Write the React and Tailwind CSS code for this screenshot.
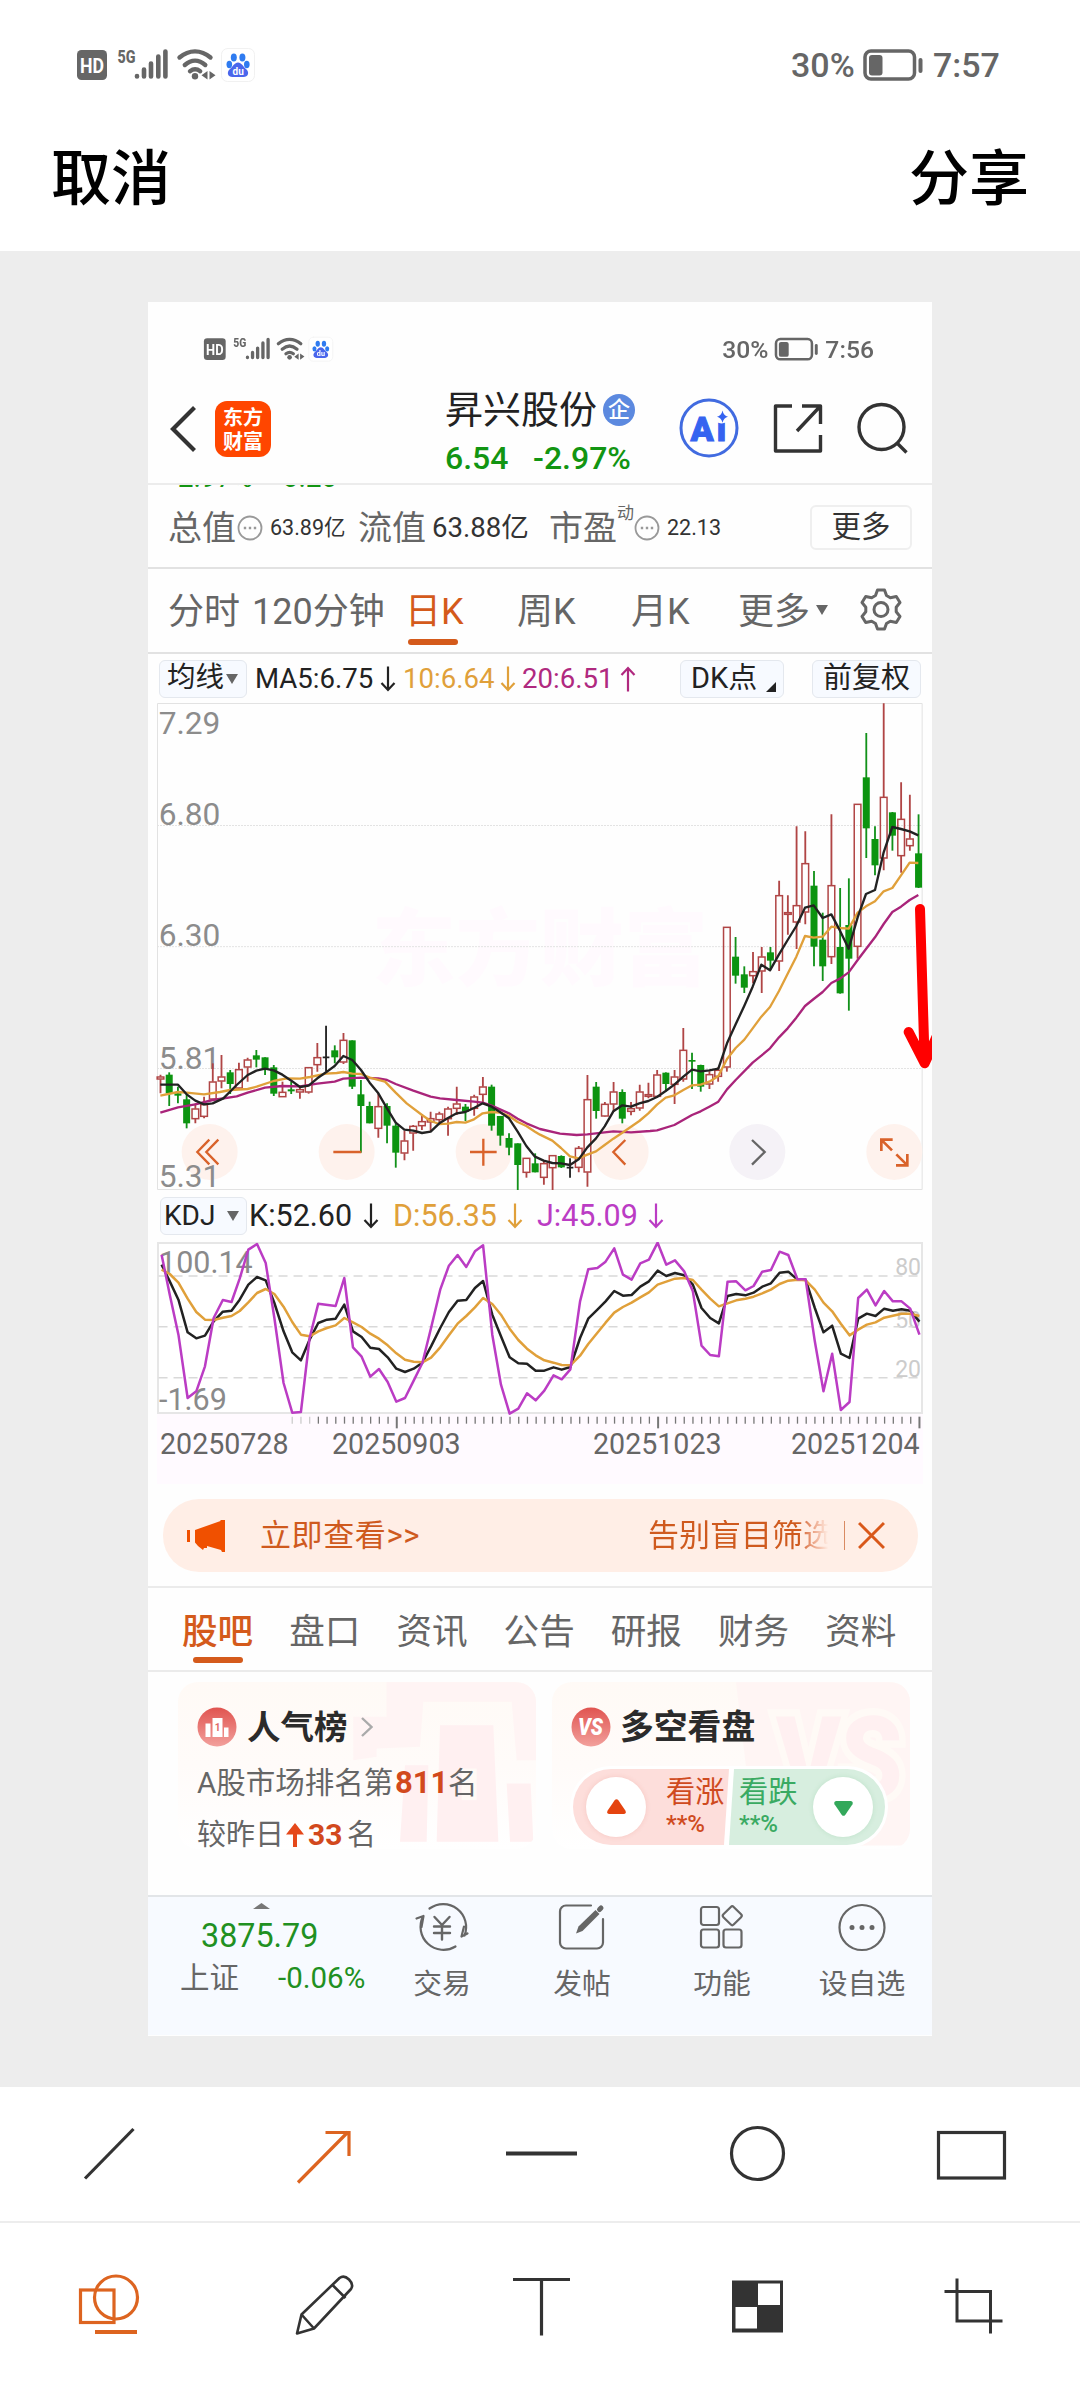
import React from 'react';
import { clsx } from 'clsx';

// [type, high, bodyTop, bodyBottom, low] - r: up, g: down, k: flat
const candles = [
  ['r', 1154, 1160, 1168, 1210], ['g', 1147, 1154, 1210, 1248], ['g', 1190, 1210, 1217, 1240], ['g', 1210, 1228, 1300, 1315],
  ['r', 1240, 1256, 1287, 1300], ['r', 1220, 1243, 1280, 1285], ['r', 1120, 1175, 1228, 1228], ['r', 1095, 1160, 1174, 1195],
  ['g', 1140, 1147, 1182, 1212], ['r', 1118, 1138, 1195, 1197], ['r', 1103, 1109, 1132, 1175], ['g', 1080, 1096, 1109, 1132],
  ['g', 1102, 1102, 1138, 1155], ['g', 1125, 1132, 1211, 1218], ['r', 1175, 1206, 1221, 1221], ['g', 1175, 1198, 1204, 1212],
  ['r', 1190, 1198, 1207, 1226], ['r', 1132, 1132, 1207, 1211], ['r', 1059, 1102, 1125, 1145], ['k', 1007, 1102, 1102, 1145],
  ['g', 1066, 1081, 1102, 1120], ['r', 1029, 1050, 1117, 1122], ['g', 1051, 1051, 1190, 1197], ['g', 1170, 1213, 1248, 1388],
  ['g', 1235, 1248, 1300, 1300], ['r', 1210, 1249, 1316, 1343], ['g', 1240, 1248, 1307, 1360], ['g', 1300, 1307, 1388, 1433],
  ['r', 1322, 1352, 1390, 1411], ['r', 1305, 1308, 1330, 1382], ['r', 1272, 1294, 1308, 1320], ['r', 1265, 1285, 1297, 1325],
  ['r', 1265, 1271, 1290, 1300], ['r', 1250, 1256, 1287, 1337], ['r', 1190, 1241, 1256, 1275], ['g', 1242, 1250, 1265, 1293],
  ['r', 1214, 1220, 1256, 1277], ['r', 1161, 1190, 1214, 1238], ['g', 1184, 1190, 1307, 1322], ['g', 1278, 1278, 1337, 1367],
  ['g', 1330, 1344, 1373, 1396], ['g', 1360, 1360, 1425, 1500], ['r', 1404, 1404, 1448, 1463], ['g', 1390, 1420, 1447, 1447],
  ['r', 1410, 1420, 1463, 1484], ['r', 1396, 1396, 1434, 1500], ['g', 1396, 1398, 1432, 1434], ['k', 1405, 1433, 1433, 1463],
  ['r', 1368, 1374, 1433, 1447], ['r', 1155, 1228, 1447, 1490], ['g', 1176, 1190, 1263, 1286], ['r', 1236, 1242, 1279, 1280],
  ['r', 1176, 1205, 1243, 1265], ['g', 1198, 1206, 1286, 1300], ['r', 1236, 1255, 1265, 1276], ['r', 1184, 1205, 1255, 1262],
  ['r', 1178, 1213, 1220, 1225], ['r', 1140, 1154, 1220, 1222], ['g', 1147, 1148, 1182, 1204], ['r', 1140, 1160, 1184, 1242],
  ['r', 1014, 1080, 1168, 1175], ['g', 1088, 1110, 1113, 1197], ['g', 1124, 1125, 1190, 1205], ['r', 1144, 1153, 1183, 1197],
  ['r', 1132, 1140, 1160, 1175], ['r', 711, 711, 1132, 1145], ['g', 741, 800, 857, 881], ['g', 829, 853, 893, 909],
  ['r', 786, 844, 858, 880], ['r', 771, 800, 844, 909], ['g', 771, 787, 812, 840], ['r', 572, 616, 814, 843],
  ['r', 616, 667, 674, 734], ['r', 409, 646, 697, 777], ['r', 424, 520, 667, 703], ['g', 543, 587, 770, 829],
  ['g', 668, 749, 829, 873], ['r', 373, 586, 801, 822], ['g', 594, 771, 910, 911], ['g', 565, 705, 806, 962],
  ['r', 342, 342, 770, 806], ['g', 129, 262, 415, 504], ['g', 409, 447, 526, 556], ['r', 40, 321, 505, 541],
  ['g', 366, 367, 437, 482], ['r', 277, 387, 498, 548], ['r', 314, 446, 468, 482], ['g', 373, 490, 593, 594],
];

const ma5 = '61,1184 114,1184 140,1213 166,1232 192,1243 218,1240 250,1225 290,1185 323,1155 349,1142 375,1136 401,1141 427,1154 454,1172 480,1191 506,1187 532,1165 558,1147 584,1128 610,1098 637,1110 663,1140 689,1178 715,1210 741,1255 767,1298 793,1319 820,1322 846,1329 872,1325 898,1300 924,1284 950,1270 976,1266 1002,1254 1028,1240 1055,1250 1081,1267 1107,1285 1133,1325 1159,1368 1185,1400 1211,1412 1237,1419 1263,1420 1290,1425 1316,1408 1342,1372 1368,1345 1394,1309 1420,1264 1447,1246 1473,1250 1498,1240 1525,1233 1551,1221 1577,1203 1603,1184 1630,1160 1656,1139 1682,1144 1708,1141 1735,1136 1761,1060 1787,1003 1813,947 1838,890 1864,824 1890,841 1917,793 1943,750 1969,708 1995,653 2021,646 2048,684 2074,673 2100,722 2126,776 2153,682 2178,612 2205,600 2231,487 2257,411 2283,417 2309,424 2335,436';
const ma10 = '61,1217 114,1206 140,1208 192,1213 240,1206 270,1200 323,1197 350,1190 401,1173 440,1165 480,1166 510,1161 558,1151 590,1149 610,1146 637,1151 663,1152 689,1163 735,1175 767,1208 800,1240 846,1275 872,1293 898,1302 924,1301 950,1296 976,1298 1002,1288 1028,1270 1055,1266 1081,1268 1107,1278 1133,1296 1159,1308 1185,1325 1200,1334 1237,1352 1263,1374 1290,1399 1316,1405 1342,1394 1368,1384 1394,1365 1420,1346 1447,1328 1473,1310 1498,1293 1525,1270 1551,1244 1577,1223 1603,1216 1630,1200 1656,1186 1682,1184 1708,1175 1735,1158 1761,1107 1787,1074 1813,1049 1838,1015 1864,980 1890,951 1917,903 1943,851 1969,800 1995,738 2021,743 2048,740 2074,710 2100,714 2126,716 2153,668 2178,649 2205,634 2231,604 2257,594 2283,556 2309,518 2335,519';
const ma20 = '61,1268 114,1252 166,1243 218,1230 290,1219 323,1208 375,1193 427,1188 480,1189 532,1181 584,1175 610,1166 663,1163 715,1165 741,1170 767,1182 820,1202 872,1220 900,1225 950,1230 1002,1235 1028,1238 1055,1247 1107,1270 1133,1286 1159,1300 1200,1317 1260,1331 1310,1335 1342,1333 1420,1324 1473,1327 1530,1323 1551,1321 1603,1305 1656,1275 1682,1264 1708,1250 1735,1235 1761,1198 1787,1170 1838,1118 1864,1097 1890,1075 1917,1042 1943,1015 1969,983 1995,948 2021,927 2048,906 2074,879 2100,866 2126,847 2153,810 2178,777 2205,742 2231,702 2257,666 2283,650 2309,630 2335,615';

const kdjJ = '42,190 58,310 75,430 93,620 110,600 127,525 144,380 162,326 179,332 195,262 212,175 229,158 246,215 263,380 281,575 298,664 315,662 332,440 349,337 383,344 400,260 417,468 434,496 451,556 468,533 485,572 502,631 519,620 536,568 553,515 570,410 588,295 605,223 622,191 639,227 656,180 672,162 690,430 707,580 724,667 741,652 758,606 775,627 792,598 810,552 826,564 843,534 862,330 878,234 896,230 912,211 929,171 946,250 963,265 980,216 997,205 1014,154 1031,220 1048,207 1066,240 1083,300 1100,463 1117,491 1134,495 1151,271 1168,270 1186,297 1202,284 1219,241 1236,236 1253,181 1270,191 1288,264 1304,264 1322,450 1339,600 1356,487 1373,656 1390,632 1407,320 1424,295 1441,342 1458,299 1475,330 1492,330 1509,352 1527,430';
const kdjK = '42,220 58,270 75,325 93,423 110,441 127,433 144,390 162,361 179,358 195,325 212,280 229,257 246,267 263,335 281,420 298,483 315,507 332,445 349,395 366,385 383,382 400,340 417,420 434,437 451,469 468,473 485,498 502,532 519,542 536,532 553,514 570,465 588,410 605,362 622,328 639,326 656,290 672,269 690,370 707,435 724,498 741,516 758,517 775,538 792,538 810,528 826,535 843,527 862,440 878,382 896,355 912,330 929,299 946,313 963,311 980,286 997,270 1014,238 1031,254 1048,245 1066,252 1083,280 1100,350 1117,380 1134,396 1151,314 1168,308 1186,312 1202,304 1219,286 1236,276 1253,244 1270,241 1288,265 1304,265 1322,350 1339,423 1356,403 1373,487 1390,500 1407,382 1424,367 1441,374 1458,352 1475,358 1492,354 1509,358 1527,391';
const kdjD = '42,235 58,248 75,274 93,322 110,362 127,385 144,386 162,379 179,374 195,359 212,333 229,305 246,293 263,308 281,346 298,392 315,430 332,435 349,420 366,410 383,402 400,380 417,393 434,407 451,427 468,442 485,462 502,486 519,505 536,511 553,513 570,499 588,468 605,432 622,397 639,374 656,348 672,320 690,338 707,370 724,412 741,446 758,472 775,492 792,507 810,514 826,521 843,522 862,493 878,458 896,424 912,394 929,364 946,347 963,334 980,318 997,303 1014,280 1031,271 1048,262 1066,260 1083,266 1100,295 1117,322 1134,345 1151,336 1168,327 1186,322 1202,316 1219,306 1236,295 1253,278 1270,268 1288,265 1304,267 1322,295 1339,334 1356,360 1373,397 1390,432 1407,415 1424,400 1441,393 1458,379 1475,373 1492,367 1509,367 1527,374';

const ticks = Array.from({ length: 73 }, (_, i) => 298 + i * 17.07);

function StatusBar({ time }) {
  return (
    <div className="flex h-[130px] w-[1080px] items-center justify-between pl-[75px] pr-[79px] text-[#666]">
      <svg className="h-10 w-[185px]" viewBox="75 45 185 40" fill="none" stroke="#666" strokeLinecap="round">
        <rect x="77" y="50" width="30" height="30" rx="4.500" fill="#666" stroke="none" />
        <text x="92" y="72.500" textAnchor="middle" fontSize="20" fontWeight="700" fill="#fff" stroke="none" textLength="24" lengthAdjust="spacingAndGlyphs">HD</text>
        <text x="117.500" y="62.500" fontSize="18.500" fontWeight="800" fill="#666" stroke="none" textLength="18" lengthAdjust="spacingAndGlyphs">5G</text>
        <path d="M137 76v.5M144 69.500v7M151 63.500v13M158.300 56.500v20M165.400 51.500v25" strokeWidth="4.600" />
        <path d="M179.500 57.500c9.500-8.200 21.500-8.200 31 0M184.800 65c6.500-5.600 14-5.600 20.500 0M190 71.200c3.400-2.500 6.800-2.500 10.200 0" strokeWidth="4.400" />
        <circle cx="195" cy="76.200" r="3.200" fill="#666" stroke="none" />
        <path d="M207.500 71v8.500l-6-4.200zM209.500 79.500V71l6 4.200z" fill="#666" stroke="none" />
        <rect x="221.500" y="48.500" width="33" height="33" rx="6" fill="#fff" stroke="#f1f1f1" />
        <g fill="#2f7bf0" stroke="none">
          <ellipse cx="233.800" cy="57.500" rx="3" ry="4" />
          <ellipse cx="242.400" cy="57.500" rx="3" ry="4" />
          <ellipse cx="229.300" cy="64.500" rx="2.800" ry="3.700" />
          <ellipse cx="246.800" cy="64.500" rx="2.800" ry="3.700" />
          <path d="M238 62.500c3.500 0 5 4 8 6.500 4 3.500 2 8-2.500 8h-11c-4.500 0-6.500-4.500-2.500-8 3-2.500 4.500-6.500 8-6.500z" fill="#4a66ec" />
        </g>
        <text x="238.200" y="74.500" textAnchor="middle" fontSize="10" fontWeight="700" fill="#fff" stroke="none">du</text>
      </svg>
      <div className="flex items-center text-[34px] font-medium leading-none">
        <span className="w-[70px]">30%</span>
        <svg className="mr-2 h-9 w-16" viewBox="862 46 64 36" fill="none" stroke="#666">
          <rect x="866" y="50" width="49.500" height="28" rx="6" strokeWidth="3.500" />
          <rect x="870" y="54" width="13.500" height="20.500" rx="3" fill="#666" stroke="none" />
          <path d="M921.500 59v11" strokeWidth="4" strokeLinecap="round" />
        </svg>
        <span className="w-[68px]">{time}</span>
      </div>
    </div>
  );
}

function Arrow({ up, className }) {
  return (
    <svg className={clsx('h-[26px] w-4 shrink-0', className)} viewBox="0 0 16 26" fill="none" stroke="currentColor" strokeWidth="2.200">
      {up ? <path d="M8 25.500V2M1.500 9 8 2l6.500 7" /> : <path d="M8 .5V24M1.500 17 8 24l6.500-7" />}
    </svg>
  );
}

function Caret({ className }) {
  return (
    <svg className={clsx('h-[10px] w-3 shrink-0', className)} viewBox="0 0 12 10" fill="currentColor">
      <path d="M0 0h12L6 10z" />
    </svg>
  );
}

function Dots() {
  return (
    <svg className="h-[26px] w-[26px] shrink-0" viewBox="0 0 26 26" fill="none" stroke="#999" strokeWidth="1.800">
      <circle cx="13" cy="13" r="11.500" />
      <path d="M6.800 13h2.400M11.800 13h2.400M16.800 13h2.400" strokeWidth="2.400" />
    </svg>
  );
}

function StockHeader() {
  return (
    <div className="flex h-[87px] items-start pl-[21px] text-[#222]">
      <svg className="mt-[9px] h-12 w-7" viewBox="0 0 28 48" fill="none" stroke="#333" strokeWidth="4.200">
        <path d="M25.500 2.500 4 24l21.500 21.500" />
      </svg>
      <div className="ml-[18px] mt-[5px] flex h-14 w-14 flex-col items-center justify-center rounded-xl bg-[#ff4600] font-['Noto_Sans_CJK_SC',sans-serif] text-[20px] font-bold leading-6 text-white">
        <span>东方</span>
        <span>财富</span>
      </div>
      <div className="ml-[174px] w-[200px]">
        <div className="flex h-7 items-center whitespace-nowrap text-[38px] leading-none">
          昇兴股份
          <span className="ml-1.5 flex h-8 w-8 items-center justify-center rounded-full bg-[#5c89df] text-[22px] font-medium text-white">企</span>
        </div>
        <div className="mt-[20px] flex h-7 items-center text-[32px] font-medium leading-none text-[#129512]">
          <span className="w-[88px]">6.54</span>
          <span>-2.97%</span>
        </div>
      </div>
      <svg className="ml-[33px] mt-[1px] h-[62px] w-[62px]" viewBox="0 0 62 62" fill="none">
        <circle cx="31" cy="31" r="28" stroke="#416be0" strokeWidth="3" />
        <text x="12.500" y="43.500" fontSize="34" fontWeight="900" letterSpacing="3" fill="#3563f0" stroke="#3563f0" strokeWidth="1">Ai</text>
        <circle cx="43.500" cy="20" r="6.500" fill="#fefefe" />
        <path d="M44.500 13.500q1.200 5.500 5.500 6.300-4.300 1-5.500 6-1.200-5-5.500-6 4.300-.8 5.500-6.300z" fill="#3563f0" />
      </svg>
      <svg className="ml-[32px] mt-[7px] h-[52px] w-[52px]" viewBox="0 0 52 52" fill="none" stroke="#333" strokeWidth="3.400" strokeLinejoin="round">
        <path d="M20 3H3.500v45h45V32M30 3h18.500v18M48 3.500 25 28" />
      </svg>
      <svg className="ml-[32px] mt-[6px] h-[54px] w-[54px]" viewBox="0 0 54 54" fill="none" stroke="#333" strokeWidth="3.400">
        <circle cx="25.500" cy="25" r="22.500" />
        <path d="M41 41l9.500 9.500" />
      </svg>
    </div>
  );
}

function Quote() {
  return (
    <div className="h-[84px] border-t-2 border-[#ececec]">
      <div className="flex h-1 items-end overflow-hidden pl-[22px] text-[28px] leading-[22px] text-[#129512]">
        <span className="w-[105px]">-2.97%</span>
        <span>-0.20</span>
      </div>
      <div className="flex h-[76px] items-center whitespace-nowrap pl-[20px] pt-px leading-none text-[#333]">
        <span className="w-[69px] text-[34px] text-[#666]">总值</span>
        <Dots />
        <span className="ml-[7px] w-[88px] text-[21.5px]">63.89亿</span>
        <span className="w-[74px] text-[34px] text-[#666]">流值</span>
        <span className="w-[117px] text-[27.6px]">63.88亿</span>
        <span className="w-[68px] text-[34px] text-[#666]">市盈</span>
        <span className="mb-[29px] w-[17px] text-[17px] text-[#666]">动</span>
        <Dots />
        <span className="ml-[7px] w-[143px] text-[21.5px]">22.13</span>
        <span className="flex h-[45px] w-[102px] items-center justify-center rounded-md border-2 border-[#efefef] text-[29.5px]">更多</span>
      </div>
    </div>
  );
}

function PeriodTabs() {
  return (
    <div className="flex h-[85px] items-center whitespace-nowrap border-t-2 border-[#e2e2e2] pl-[20px] pt-[3px] text-[36px] leading-none text-[#666]">
      <span className="w-[84px]">分时</span>
      <span className="w-[153px]">120分钟</span>
      <span className="relative w-[112px] text-[#d45a1b]">
        日K
        <span className="absolute -bottom-[15px] left-[3px] h-[6px] w-[50px] rounded-full bg-[#d45a1b]" />
      </span>
      <span className="w-[114px]">周K</span>
      <span className="w-[107px]">月K</span>
      <span className="w-[78px]">更多</span>
      <Caret className="mb-[4px]" />
      <svg className="mb-[4px] ml-[30px] h-[44px] w-[46px]" viewBox="0 0 46 44" fill="none" stroke="#666" strokeWidth="3" strokeLinejoin="round">
        <path d="M19.500 2h7l2 5.500 3.800 2.200 6-1.200 3.700 6-3.800 4.700v4.600l3.800 4.700-3.700 6-6-1.200-3.800 2.200-2 5.500h-7l-2-5.500-3.800-2.200-6 1.200-3.700-6 3.800-4.700v-4.600L4 14.500l3.700-6 6 1.200 3.800-2.200z" />
        <circle cx="23" cy="21.500" r="7" />
      </svg>
    </div>
  );
}

function MaRow() {
  return (
    <div className="flex h-[51px] items-center whitespace-nowrap border-t-2 border-[#e2e2e2] pl-[11px] text-[27.6px] leading-none text-[#222]">
      <span className="flex h-[38px] w-[88px] items-center rounded-md border border-[#e4e8ee] bg-[#f7faff] pl-[7px] text-[28.5px]">
        均线
        <Caret className="ml-[2px] text-[#666]" />
      </span>
      <span className="ml-[8px] w-[125px]">MA5:6.75</span>
      <Arrow />
      <span className="ml-[7px] w-[97px] text-[#e0a03a]">10:6.64</span>
      <Arrow className="text-[#e0a03a]" />
      <span className="ml-[6px] w-[98px] text-[#b0297f]">20:6.51</span>
      <Arrow up className="text-[#b0297f]" />
      <span className="ml-[44px] flex h-[38px] w-[104px] items-center rounded-md border border-[#e4e8ee] bg-[#f7faff] pl-[10px] text-[29px]">
        DK点
        <svg className="ml-[9px] mt-[16px] h-[10px] w-[10px]" viewBox="0 0 10 10"><path d="M10 0v10H0z" fill="#222" /></svg>
      </span>
      <span className="ml-[28px] flex h-[38px] w-[109px] items-center justify-center rounded-md border border-[#e4e8ee] bg-[#f7faff] text-[29px]">前复权</span>
    </div>
  );
}

function KChart() {
  return (
    <div className="relative ml-[9px] h-[487px] w-[765px]">
      <svg className="h-full w-full overflow-visible" viewBox="51 39 2295 1461" fill="none" strokeWidth="5.500" strokeLinejoin="round">
        <text x="695" y="866" fontSize="252" fontWeight="900" fill="#fffafe" className="font-['Noto_Sans_CJK_SC',sans-serif]">东方财富</text>
        <path d="M51 406.500h2295M51 770h2295M51 1135.500h2295" stroke="#e3e3e3" strokeWidth="3" strokeDasharray="6 3" />
        <rect x="52.500" y="40.500" width="2294" height="1458" stroke="#e2e2e2" strokeWidth="3" />
        {[209, 620, 1031, 1442, 2263].map((x) => (
          <circle key={x} cx={x} cy="1386" r="84" fill="#fef2ed" />
        ))}
        <circle cx="1852" cy="1386" r="84" fill="#f5f2f7" />
        <g fill="#8c8c8c" fontSize="95">
          <text x="56" y="133">7.29</text>
          <text x="56" y="405">6.80</text>
          <text x="56" y="769">6.30</text>
          <text x="56" y="1136">5.81</text>
          <text x="56" y="1490">5.31</text>
        </g>
        {candles.map(([type, high, top, bottom, low], i) => {
          const x = 61.5 + i * 26.14;
          if (type === 'k') {
            return <path key={i} d={`M${x} ${high}V${low}M${x - 10} ${top}h20`} stroke="#222" />;
          }
          if (type === 'g') {
            return (
              <g key={i}>
                <path d={`M${x} ${high}V${low}`} stroke="#12911a" />
                <rect x={x - 10.5} y={top} width="21" height={Math.max(bottom - top, 5)} fill="#0c9410" />
              </g>
            );
          }
          return (
            <g key={i} stroke="#b04545">
              <path d={`M${x} ${high}V${top}M${x} ${bottom}V${low}`} />
              <rect x={x - 10} y={top + 1} width="20" height={Math.max(bottom - top - 2, 3)} strokeLinejoin="miter" strokeWidth="4.500" />
            </g>
          );
        })}
        <polyline points={ma20} stroke="#a9247a" strokeWidth="7" />
        <polyline points={ma10} stroke="#e0a03a" strokeWidth="7" />
        <polyline points={ma5} stroke="#222" strokeWidth="7" />
        <g stroke="#d9622a" strokeWidth="7" strokeLinejoin="miter">
          <path d="M208 1349l-36 37 36 37M235 1349l-36 37 36 37" />
          <path d="M580 1386h84M990 1386h80M1030 1346v81" />
          <path d="M1456 1350l-36 36 36 38" />
          <path d="M1836 1350l38 36-38 38" stroke="#666" />
          <path d="M2224 1383v-34h34M2226 1351l30 30M2302 1392v34h-34M2300 1424l-31-31" strokeWidth="8" />
        </g>
        <g stroke="#f00" strokeWidth="30" strokeLinecap="round">
          <path d="M2340 657l14 462M2306 1026l48 94 42-94" />
        </g>
      </svg>
    </div>
  );
}

function KdjRow() {
  return (
    <div className="flex h-[52px] items-center whitespace-nowrap pl-[12px] text-[30.5px] leading-none text-[#222]">
      <span className="flex h-[38px] w-[87px] items-center rounded-md border border-[#e4e8ee] bg-[#f7faff] pl-[3px] text-[28px]">
        KDJ
        <Caret className="ml-[12px] text-[#666]" />
      </span>
      <span className="ml-[2px] w-[114px]">K:52.60</span>
      <Arrow />
      <span className="ml-[14px] w-[114px] text-[#e0a03a]">D:56.35</span>
      <Arrow className="text-[#e0a03a]" />
      <span className="ml-[14px] w-[111px] text-[#bb3cc4]">J:45.09</span>
      <Arrow className="text-[#bb3cc4]" />
    </div>
  );
}

function KdjChart() {
  return (
    <div className="ml-[9px] h-[242px] w-[766px] bg-[#fffaff]">
      <div className="relative h-[172px] border-2 border-[#e6e6e6] bg-white text-[#8a8a8a]">
        <span className="absolute left-0 top-[4px] text-[30.5px] leading-none">100.14</span>
        <span className="absolute left-0 top-[141px] text-[30.5px] leading-none">-1.69</span>
        <span className="absolute right-0 top-[12px] text-[23px] leading-none text-[#ccc]">80</span>
        <span className="absolute right-0 top-[65px] text-[23px] leading-none text-[#ccc]">50</span>
        <span className="absolute right-0 top-[114px] text-[23px] leading-none text-[#ccc]">20</span>
        <svg className="absolute -left-[2px] -top-[2px] h-[187px] w-[766px]" viewBox="33 152 1501 561" preserveAspectRatio="none" fill="none" strokeLinejoin="round">
          <path d="M36 254h1495M36 406h1495M36 559h1495" stroke="#d9d9d9" strokeWidth="1.500" strokeDasharray="9 6" vectorEffect="non-scaling-stroke" />
          <polyline points={kdjK} stroke="#222" strokeWidth="2.500" vectorEffect="non-scaling-stroke" />
          <polyline points={kdjD} stroke="#e0a03a" strokeWidth="2.500" vectorEffect="non-scaling-stroke" />
          <polyline points={kdjJ} stroke="#bb3cc4" strokeWidth="2.500" vectorEffect="non-scaling-stroke" />
          {ticks.map((x, i) => (
            <path
              key={x}
              d={`M${x} 676V${[12, 42, 72].includes(i) ? 711 : 697}`}
              stroke={i < 3 ? '#ccc' : '#777'}
              strokeWidth={[12, 42, 72].includes(i) ? 2 : 1.3}
              vectorEffect="non-scaling-stroke"
            />
          ))}
        </svg>
      </div>
      <div className="mt-[14px] flex text-[28.6px] leading-8 text-[#666]">
        <span className="ml-[3px] w-[172px]">20250728</span>
        <span className="w-[261px]">20250903</span>
        <span className="w-[198px]">20251023</span>
        <span>20251204</span>
      </div>
    </div>
  );
}

function Banner() {
  return (
    <div className="ml-[15px] mt-[15px] flex h-[73px] w-[755px] items-center whitespace-nowrap rounded-[36px] bg-[#ffeee6] text-[31px] leading-none text-[#cf5a1e]">
      <svg className="ml-6 h-8 w-[38px]" viewBox="0 0 38 32" fill="#f05000">
        <path d="M0 10h3v12H0zM8 10 33.500 1V0H38v32h-3l-1-2-14-4v2h-3l-1 2-5-4-3-3.500z" />
      </svg>
      <span className="ml-[35px] w-[388px] tracking-[.6px]">立即查看&gt;&gt;</span>
      <span className="w-[184px] overflow-hidden bg-gradient-to-r from-[#cf5a1e] from-82% to-[#ffeee6] to-98% bg-clip-text text-transparent">告别盲目筛选</span>
      <span className="ml-[12px] h-[29px] w-px bg-[#d98a62]" />
      <svg className="ml-[13px] h-[27px] w-[27px]" viewBox="0 0 26 26" fill="none" stroke="#d9581a" strokeWidth="2.800">
        <path d="M1 1l24 24M25 1 1 25" />
      </svg>
    </div>
  );
}

function SectionTabs() {
  const tabs = ['股吧', '盘口', '资讯', '公告', '研报', '财务', '资料'];
  return (
    <div className="mt-[14px] flex h-[86px] items-center border-y-2 border-[#ebebeb] pl-[16px] text-[35.6px] leading-none text-[#666]">
      {tabs.map((tab, i) => (
        <span key={tab} className={clsx('relative flex w-[107.2px] justify-center pt-[7px]', i === 0 && 'font-medium text-[#d45a1b]')}>
          {tab}
          {i === 0 && <span className="absolute -bottom-[13px] h-[6px] w-[50px] rounded-full bg-[#d45a1b]" />}
        </span>
      ))}
    </div>
  );
}

function RankCard() {
  return (
    <div className="relative h-[167px] w-[358px] overflow-hidden rounded-[20px] bg-gradient-to-b from-[#fffaf6] via-[#fffbf9] to-white">
      <svg className="absolute inset-0 h-full w-full" viewBox="54 6 1074 500" fill="#fff4f4">
        <path d="M680 6h448v234h-58l-15-175H790l-10 135-130 5v25l-70 10V110h100z" />
        <path d="M735 255h70l-5 230h-80zM840 135h160l15 350H830zM1040 310h72l8 175h-70z" fill="#fff0f1" />
        <path d="M905 265h45v95h-45z" fill="#fffaf6" />
      </svg>
      <div className="relative pl-[19px]">
        <div className="flex h-[44px] items-center pt-[45px] text-[33.5px] font-bold leading-none text-[#2b2b2b]">
          <svg className="h-10 w-10" viewBox="0 0 40 40">
            <defs>
              <linearGradient id="rank" x2="0" y2="1"><stop stopColor="#e05450" /><stop offset="1" stopColor="#f2a09c" /></linearGradient>
            </defs>
            <circle cx="20" cy="20" r="19.500" fill="url(#rank)" />
            <path d="M8.500 16.500h5V30h-5zM15.500 11h10v19h-10zM27 20.500h4.500V30H27z" fill="#fff" />
            <text x="20.500" y="24" textAnchor="middle" fontSize="10" fontWeight="700" fill="#e06a66">1</text>
          </svg>
          <span className="ml-[10px] w-[114px] pt-[2px]">人气榜</span>
          <svg className="h-5 w-[12px]" viewBox="0 0 12 20" fill="none" stroke="#aaa" strokeWidth="2.400"><path d="M1 1l9.500 9L1 19" /></svg>
        </div>
        <div className="mt-[39px] flex items-center whitespace-nowrap text-[29.5px] leading-[34px] text-[#666]">
          <span className="w-[198px]">A股市场排名第</span>
          <span className="w-[53px] text-[31px] font-bold text-[#d2491d]">811</span>
          <span>名</span>
        </div>
        <div className="mt-[18px] flex items-center whitespace-nowrap text-[29px] leading-[34px] text-[#666]">
          <span className="w-[89px]">较昨日</span>
          <svg className="h-6 w-[18px]" viewBox="0 0 18 24" fill="#e5481a"><path d="M9 0l9 11.500h-7V24H7V11.500H0z" /></svg>
          <span className="ml-[4px] w-[39px] text-[30px] font-bold text-[#d2491d]">33</span>
          <span>名</span>
        </div>
      </div>
    </div>
  );
}

function VoteCard() {
  return (
    <div className="relative h-[167px] w-[358px] overflow-hidden rounded-[20px] bg-gradient-to-b from-[#fffaf6] via-[#fffbf9] to-white">
      <svg className="absolute inset-0 h-full w-full" viewBox="18 6 1074 500" fill="#fff5f4">
        <path d="M570 6h522v490H900L600 260z" />
        <text x="690" y="350" fontSize="340" fontWeight="900" fill="#fff0f1" stroke="#fffaf6" strokeWidth="44" paintOrder="stroke" textLength="380" lengthAdjust="spacingAndGlyphs">VS</text>
      </svg>
      <div className="relative">
        <div className="flex h-[44px] items-center pl-[19px] pt-[45px] text-[33.8px] font-bold leading-none text-[#2b2b2b]">
          <svg className="h-10 w-10" viewBox="0 0 40 40">
            <circle cx="20" cy="20" r="19.500" fill="url(#rank)" />
            <text x="19.500" y="28" textAnchor="middle" fontSize="23" fontWeight="900" fontStyle="italic" fill="#fff" textLength="25" lengthAdjust="spacingAndGlyphs">VS</text>
          </svg>
          <span className="ml-[9px] pt-[2px]">多空看盘</span>
        </div>
        <div className="relative ml-[18px] mt-[39px] flex h-[82px] w-[318px] items-center rounded-full bg-white px-[3px] leading-none">
          <svg className="absolute left-[3px] top-[3px] h-[76px] w-[312px]" viewBox="0 0 312 76">
            <path d="M38 0h118l-5 76H38a38 38 0 010-76z" fill="#fddedb" />
            <path d="M161 0h113a38 38 0 010 76H156z" fill="#d7eedf" />
          </svg>
          <span className="relative ml-[13px] flex h-[60px] w-[60px] items-center justify-center rounded-full bg-white shadow-[0_0_5px_rgba(200,80,60,0.15)]">
            <svg className="mb-[2px] h-[15px] w-[19px]" viewBox="0 0 19 15" fill="#e5440f"><path d="M8 .8q1.500-1.300 3 0l7.500 11q1 2.700-1.500 3.200H2Q-.500 14.500.5 11.800z" /></svg>
          </span>
          <span className="relative ml-[20px] w-[73px] text-[#cf4a20]">
            <span className="block text-[29.2px]">看涨</span>
            <span className="mt-[4px] block text-[24px] font-medium">**%</span>
          </span>
          <span className="relative w-[74px] text-[#3aaa62]">
            <span className="block text-[29.2px]">看跌</span>
            <span className="mt-[4px] block text-[24px] font-medium">**%</span>
          </span>
          <span className="relative flex h-[60px] w-[60px] items-center justify-center rounded-full bg-white shadow-[0_0_5px_rgba(60,160,90,0.15)]">
            <svg className="mt-[3px] h-[15px] w-[19px]" viewBox="0 0 19 15" fill="#33a85b"><path d="M8 14.200q1.500 1.300 3 0l7.500-11Q19.500.5 17 0H2Q-.500.5.5 3.200z" /></svg>
          </span>
        </div>
      </div>
    </div>
  );
}

function BottomItem({ label, children }) {
  return (
    <div className="flex w-[140px] flex-col items-center">
      <svg className="mt-[5px] h-[54px] w-[60px]" viewBox="0 0 60 54" fill="none" stroke="#666" strokeWidth="2.200" strokeLinecap="round" strokeLinejoin="round">
        {children}
      </svg>
      <span className="mt-[13px] text-[28.8px] leading-[30px]">{label}</span>
    </div>
  );
}

function BottomBar() {
  return (
    <div className="flex h-[140px] border-t-2 border-[#e2e5e8] bg-[#f7faff] pl-[32px] text-[#666]">
      <div className="w-[192px]">
        <svg className="ml-[73px] mt-[6px] h-[6px] w-[17px]" viewBox="0 0 17 6" fill="#777"><path d="M8.500 0 17 6H0z" /></svg>
        <div className="mt-[10px] pl-[21px] text-[32.3px] leading-[34px] text-[#219021]">3875.79</div>
        <div className="mt-[8px] flex text-[29.500px] leading-[34px]">
          <span className="w-[98px]">上证</span>
          <span className="text-[#219021]">-0.06%</span>
        </div>
      </div>
      <BottomItem label="交易">
        <path d="M17.500 6.500a23 23 0 0135 27M43.500 44.500A23 23 0 0111 14.500M4.500 16.500l7-2.500-2 11M55.500 31.500l-6 3 2.500-10" />
        <path d="M22.500 15l7.500 8 7.500-8M22 24.500h16M22 31h16M30 23v14.500" strokeWidth="2.400" />
      </BottomItem>
      <BottomItem label="发帖">
        <path d="M39 3.500H14a6 6 0 00-6 6v31a6 6 0 006 6h31a6 6 0 006-6V17" />
        <path d="M24 31.500l2.500-7L43.500 8l4 4-17 17z" fill="#666" stroke="none" />
        <path d="M47.500 7.500l1.500-1.500" strokeWidth="5" />
      </BottomItem>
      <BottomItem label="功能">
        <rect x="9" y="5" width="18" height="18" rx="2.500" />
        <rect x="9" y="27.500" width="18" height="18" rx="2.500" />
        <rect x="31.500" y="27.500" width="18" height="18" rx="2.500" />
        <rect x="33" y="6.500" width="14.500" height="14.500" rx="2" transform="rotate(45 40.250 13.750)" />
      </BottomItem>
      <BottomItem label="设自选">
        <circle cx="30" cy="25.500" r="22.500" />
        <path d="M20 25.500h.01M30 25.500h.01M40 25.500h.01" strokeWidth="5" />
      </BottomItem>
    </div>
  );
}

function Tool({ active, children }) {
  return (
    <svg className={clsx('h-20 w-20', active ? 'text-[#dd6420]' : 'text-[#333]')} viewBox="0 0 80 80" fill="none" stroke="currentColor" strokeWidth="3.200">
      {children}
    </svg>
  );
}

function EditorTools() {
  return (
    <div className="bg-white">
      <div className="flex h-[136px] items-center justify-around border-b-2 border-[#ededed]">
        <Tool><path d="M17 64.500l48.500-49.500" /></Tool>
        <Tool active><path d="M14 68.500l50-50.500M41.500 18.500H65V42" /></Tool>
        <Tool><path d="M6 39.500h71" strokeWidth="3.800" /></Tool>
        <Tool><circle cx="41.500" cy="39.500" r="26" /></Tool>
        <Tool><rect x="6.500" y="18.500" width="66" height="45.500" /></Tool>
      </div>
      <div className="flex h-[165px] items-center justify-around">
        <Tool active>
          <rect x="12.500" y="24" width="33.500" height="32.500" />
          <circle cx="48" cy="31.500" r="21.500" />
          <path d="M27 66h42" strokeWidth="3.800" />
        </Tool>
        <Tool>
          <path d="M13 67.500l4.500-19 38-36.500q4.500-3.500 9.500 1.500t2 9.500L30 62.500zM17.500 48.500 30 62.500M48.500 19l13 13" strokeWidth="2.600" strokeLinejoin="round" />
        </Tool>
        <Tool><path d="M13 13.500h57M41.500 13.500v56" /></Tool>
        <Tool>
          <rect x="16" y="14.500" width="51" height="52" fill="#333" stroke="none" />
          <path d="M42 17.500h22V39H42zM19.500 41H41v21.500H19.500z" fill="#fff" stroke="none" />
        </Tool>
        <Tool><path d="M25 12.500v42.500H70.500M12.500 25.500h46v42" strokeWidth="3" /></Tool>
      </div>
    </div>
  );
}

export default function App() {
  return (
    <div className="h-[2388px] w-[1080px] overflow-hidden bg-white font-[Roboto,'Noto_Sans_CJK_SC',sans-serif]">
      <StatusBar time="7:57" />
      <div className="flex h-[121px] items-start justify-between px-[51px] pt-[18px] text-[60px] font-medium leading-[64px] text-black">
        <span>取消</span>
        <span>分享</span>
      </div>
      <div className="flex h-[1836px] items-start justify-center bg-[#ededed] pt-[51px]">
        <div className="h-[1734px] w-[784px] overflow-hidden bg-[#fefefe]">
          <div className="h-[94px] w-[784px]">
            <div className="w-[1080px] origin-top-left scale-[0.726]">
              <StatusBar time="7:56" />
            </div>
          </div>
          <StockHeader />
          <Quote />
          <PeriodTabs />
          <MaRow />
          <KChart />
          <KdjRow />
          <KdjChart />
          <Banner />
          <SectionTabs />
          <div className="flex h-[223px] gap-4 pl-[30px] pt-[10px]">
            <RankCard />
            <VoteCard />
          </div>
          <BottomBar />
        </div>
      </div>
      <EditorTools />
    </div>
  );
}
